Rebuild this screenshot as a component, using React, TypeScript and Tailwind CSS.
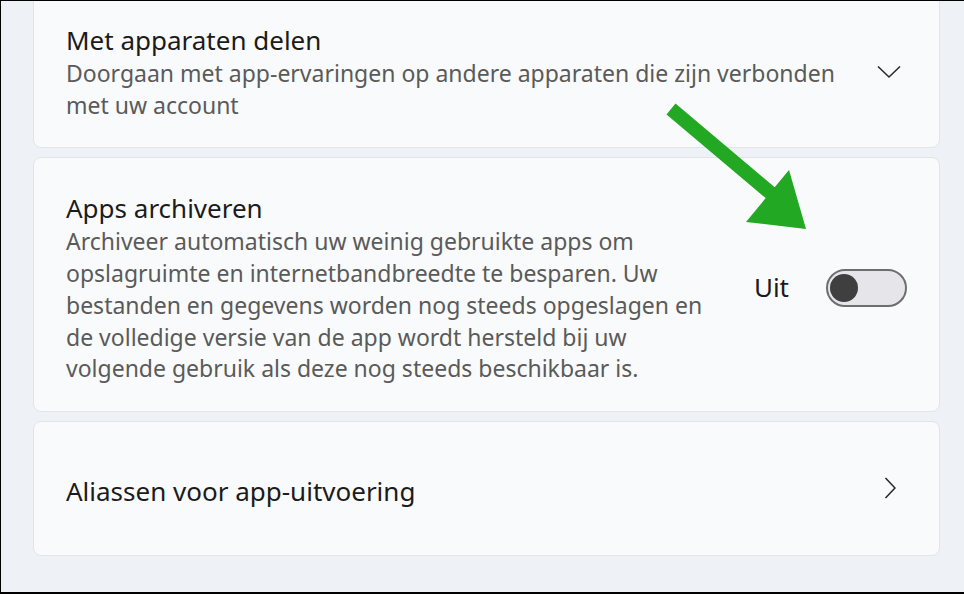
import React from 'react';

const FONT = { fontFamily: '"Noto Sans", "Open Sans", sans-serif' };

const CARD = 'flex items-center rounded-[8px] border border-[#e2e4e8] bg-[#f9fafb] pl-[32px]';

const ChevronDown = () => (
  <svg width="24" height="14" viewBox="0 0 24 14" className="mr-[5px]">
    <path d="M1 1.5 L12 12 L23 1.5" fill="none" stroke="#2b2b2b" strokeWidth="1.6" />
  </svg>
);

const ChevronRight = () => (
  <svg width="12" height="22" viewBox="0 0 12 22" className="mr-[10px]">
    <path d="M1.5 1 L11 11 L1.5 21" fill="none" stroke="#2b2b2b" strokeWidth="1.6" />
  </svg>
);

// toggle in "uit" stand
const Toggle = () => (
  <div className="flex h-[38px] w-[81px] items-center rounded-full border-2 border-[#6e6e6e] bg-[#e6e6ea] pl-[2px]">
    <div className="h-[28px] w-[28px] rounded-full bg-[#3f3f3f]" />
  </div>
);

const Arrow = () => (
  <svg className="absolute left-0 top-0" width="964" height="594" viewBox="0 0 964 594">
    <polygon
      points="665.5,113.4 674.5,102.6 773.7,186.3 788,169 805,228 745,221 764.7,197.1"
      fill="#22a822"
    />
  </svg>
);

const Lines = ({ lines }: { lines: string[] }) => (
  <div className="text-[23px] leading-[31.7px] text-[#5a5a5a]">
    {lines.map((l) => (
      <span key={l} className="block whitespace-nowrap">
        {l}
      </span>
    ))}
  </div>
);

export default function App() {
  return (
    <div
      className="relative h-[594px] w-[964px] overflow-hidden border-t border-b-2 border-l border-black bg-[#eef1f6]"
      style={FONT}
    >
      <div className="flex flex-col gap-[9px] pl-[32px] pr-[24px]">
        {/* Met apparaten delen */}
        <div className={`${CARD} -mt-[12px] pt-[32px] pb-[26px] pr-[33px]`}>
          <div className="flex-1">
            <div className="text-[26px] leading-[36px] text-[#1b1b1b]">Met apparaten delen</div>
            <Lines
              lines={[
                'Doorgaan met app-ervaringen op andere apparaten die zijn verbonden',
                'met uw account',
              ]}
            />
          </div>
          <ChevronDown />
        </div>

        {/* Apps archiveren */}
        <div className={`${CARD} pt-[32px] pb-[26px] pr-[32px]`}>
          <div className="flex-1">
            <div className="text-[26px] leading-[36px] text-[#1b1b1b]">Apps archiveren</div>
            <Lines
              lines={[
                'Archiveer automatisch uw weinig gebruikte apps om',
                'opslagruimte en internetbandbreedte te besparen. Uw',
                'bestanden en gegevens worden nog steeds opgeslagen en',
                'de volledige versie van de app wordt hersteld bij uw',
                'volgende gebruik als deze nog steeds beschikbaar is.',
              ]}
            />
          </div>
          <div className="flex items-center gap-[37px]">
            <span className="text-[26px] text-[#1b1b1b]">Uit</span>
            <Toggle />
          </div>
        </div>

        {/* Aliassen */}
        <div className={`${CARD} h-[135px] pr-[33px]`}>
          <div className="flex-1 pt-[6px] text-[26px] text-[#1b1b1b]">Aliassen voor app-uitvoering</div>
          <ChevronRight />
        </div>
      </div>
      <Arrow />
    </div>
  );
}
